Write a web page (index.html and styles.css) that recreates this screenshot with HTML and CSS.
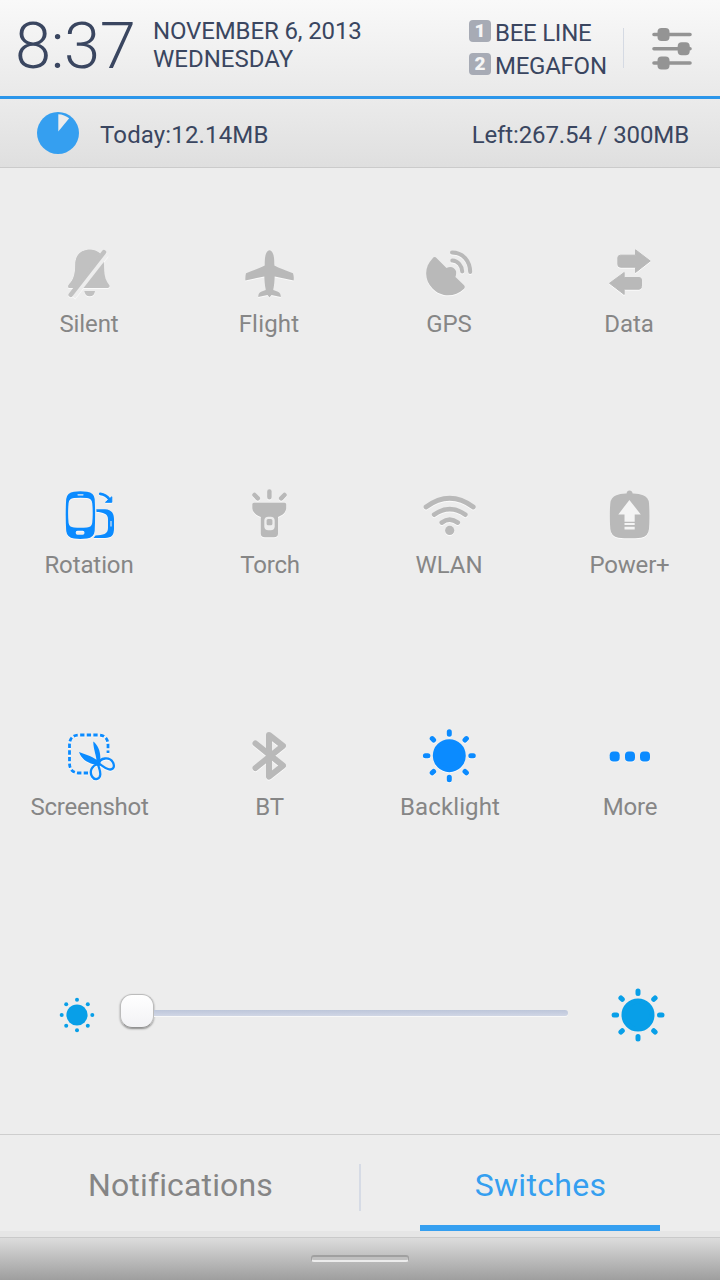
FILE: index.html
```html
<!DOCTYPE html>
<html lang="en">
<head>
<meta charset="utf-8">
<title>Quick switches</title>
<link rel="stylesheet" href="styles.css">
</head>
<body>
<div class="panel">
  <header class="header">
    <div class="clock">8:37</div>
    <div class="date"><span class="day">NOVEMBER 6, 2013</span><span class="weekday">WEDNESDAY</span></div>
    <div class="carriers">
      <div class="carrier"><span class="sim">1</span><span class="bee">BEE LINE</span></div>
      <div class="carrier"><span class="sim">2</span><span class="mega">MEGAFON</span></div>
    </div>
    <div class="rule"></div>
    <svg class="settings" width="44" height="44" viewBox="0 0 44 44">
      <g stroke="#949494" stroke-width="3.600" stroke-linecap="round"><path d="M4 8.500H40M4 22.700H40M4 37H40"/></g>
      <g fill="#949494"><rect x="7.500" y="2" width="12" height="13" rx="4"/><rect x="27.700" y="16.200" width="12" height="13" rx="4"/><rect x="7.500" y="30.500" width="12" height="13" rx="4"/></g>
    </svg>
  </header>
  <section class="usage">
    <svg class="pie" width="44" height="44" viewBox="0 0 44 44"><circle cx="22" cy="22" r="21" fill="#359ff0"/><path d="M22.300 20.500V3.200A19 19 0 0 1 33.200 7.300Z" fill="#ececec"/></svg>
    <span class="today">Today:12.14MB</span>
    <span class="left">Left:267.54 / 300MB</span>
  </section>
  <main class="grid">
    <div class="switch"><svg class="icon" viewBox="0 0 60 60">
      <g fill="#c1c1c1"><path d="M30 5.700C21 5.700 15.500 11 15.300 21C15.200 31 13.500 36 9 40.500Q7 44 10 44H48Q51 43 48.500 40C45 35 44.200 31 44 20C43.500 11 38.500 5.700 30 5.700Z"/><path d="M24.300 47H35Q34.500 52.300 29.700 52.300T24.300 47Z"/></g>
      <path d="M12.200 52L45.500 9.400" stroke="#ededed" stroke-width="8"/><path d="M10.700 50.800L44 8.200" stroke="#c1c1c1" stroke-width="4.500" stroke-linecap="round"/><path d="M15.300 21C15.500 11 21 5.700 30 5.700Q36 5.700 40 10L22 35.500L14.500 44H10Q7 44 9 40.500C13.500 36 15.200 31 15.300 21Z" fill="#c1c1c1"/>
    </svg><span class="label">Silent</span></div>
    <div class="switch"><svg class="icon" viewBox="0 0 60 60"><path fill="#b9b9b9" d="M29.500 6.200C26 7 24.700 11 24.700 21.500C20 24 13 26.500 6 29.200Q5 33 5.400 36.400L24.300 32.500C24.300 37 25 42 25.700 46C22 47.500 18 48 18.300 53L27.500 51L29.500 53.500L31.500 51L40.800 53C41 48 37 47.500 33.300 46C34 42 34.700 37 34.700 32.500L53.700 36.400Q54.200 33 53 29.200C46 26.500 39 24 34.400 21.500C34.400 11 33 7 29.500 6.200Z"/></svg><span class="label flight">Flight</span></div>
    <div class="switch"><svg class="icon" viewBox="0 0 60 60"><path fill="#b9b9b9" d="M16.500 14Q14.500 12 12.500 14.500C4 23 4 36 12.500 44.500C21 53.500 35 53.500 43.800 45Q45.800 43 43.800 41L35.500 33Q36.500 30 36 27C34 22.500 30 22 26.500 24Z"/><path fill="none" stroke="#b9b9b9" stroke-width="4" stroke-linecap="round" d="M32 8.500C43 8.500 50 17 50.200 28M32.300 16.600C38 16.800 42 22 42.200 27.500"/></svg><span class="label">GPS</span></div>
    <div class="switch"><svg class="icon" viewBox="0 0 60 60"><path fill="#b9b9b9" stroke="#b9b9b9" stroke-linejoin="round" d="M20.500 11.200H35.500V5.800L50.200 17L35.500 28.500V23.200H20.500Q17.800 23.200 17.800 20.500V14Q17.800 11.200 20.500 11.200ZM39 33.500H24.200V28.500L9.500 39.300L24.200 50.500V45.200H39Q41.500 45.200 41.500 42.500V36Q41.500 33.500 39 33.500Z"/></svg><span class="label">Data</span></div>

    <div class="switch"><svg class="icon" viewBox="0 0 60 60">
      <path fill="#0b8bff" fill-rule="evenodd" d="M14 6.700Q20 5.800 27 6.700Q34 7.500 34.700 14Q35.500 30 34.700 46Q34 52.600 27 53.500Q20 54.300 14 53.500Q7 52.600 6.200 46Q5.200 30 6.200 14Q7 7.500 14 6.700ZM14 13Q9 13.500 8.600 18Q7.600 29 8.600 38Q9 42.200 14 42.500Q20 43.100 27 42.500Q31.700 42.200 32.200 38Q33.200 29 32.200 18Q31.700 13.500 27 13Q20 12.400 14 13ZM17.500 45.800Q15.700 45.900 15.700 47.800T17.500 49.700H22.700Q24.500 49.700 24.500 47.800T22.700 45.800Z"/>
      <path stroke="#ededed" stroke-width="1.200" stroke-linecap="round" d="M18 9.800H23"/>
      <path fill="#0b8bff" d="M36.300 24.300H45C52 24.600 53.900 29 54 34V44C53.800 50 52 52.800 45 53H33.500L35.500 50.500C43 50.200 48 49 48 43V34C48 29 43 27 36.500 27Z"/><path stroke="#ededed" stroke-width="1.100" d="M51 36V41.500"/>
      <path fill="none" stroke="#0b8bff" stroke-width="2.800" stroke-linecap="round" d="M40.300 8.900Q46 9.500 49.500 14.500"/><path fill="#0b8bff" stroke="#0b8bff" stroke-linejoin="round" d="M51.800 11.800V17.300H45.500Z"/>
    </svg><span class="label">Rotation</span></div>
    <div class="switch"><svg class="icon" viewBox="0 0 60 60"><path stroke="#b9b9b9" stroke-width="4.500" stroke-linecap="round" d="M29.400 6.500V12.200M14.500 10L17.800 13.300M44.500 10L41.200 13.300"/><path fill="#b9b9b9" d="M14 17.700H44.500Q46.200 17.700 46.200 19.500V23C46.200 27.500 42 30.500 38 32V48.500Q38 52.300 34 52.300H24.700Q20.800 52.300 20.800 48.500V32C17 30.500 12.300 27.500 12.300 23V19.500Q12.300 17.700 14 17.700Z"/><rect x="24.300" y="31.800" width="10.400" height="13.500" rx="4" fill="#ededed"/><rect x="26.600" y="34" width="5.800" height="6.200" rx="1.500" fill="#b9b9b9"/></svg><span class="label torch">Torch</span></div>
    <div class="switch"><svg class="icon" viewBox="0 0 60 60"><g fill="none" stroke="#b9b9b9" stroke-width="4.700" stroke-linecap="round"><path d="M6 22Q29.700 4.500 53.300 22M14.200 29.700Q29.700 18.500 45.300 29.700M21.800 37.600Q29.700 31.500 37.700 37.600"/></g><circle cx="29.700" cy="45.400" r="4.600" fill="#b9b9b9"/></svg><span class="label">WLAN</span></div>
    <div class="switch"><svg class="icon" viewBox="0 0 60 60"><path fill="#b9b9b9" d="M26.500 8.500Q27 5.600 29.500 5.600T32.700 8.500Q39 8.400 43 10.200Q48.500 12.500 49 18Q50 31 49 44Q48.300 51.500 41 52.700Q29.500 54 18.500 52.700Q11 51.500 10.300 44Q9.300 31 10.300 18Q11 12.500 16.300 10.200Q20 8.400 26.500 8.500Z"/><path fill="#f4f4f4" d="M29.400 15L40.800 29.400H34.700V36.700H24.500V29.400H18.300ZM24.500 38H34.700V40H24.500ZM24.500 41.700H34.700V44.400H24.500Z"/></svg><span class="label power">Power+</span></div>

    <div class="switch"><svg class="icon" viewBox="0 0 60 60">
      <path fill="none" stroke="#0b8bff" stroke-width="2.800" stroke-dasharray="4.300 2.300" d="M28 47H19.500Q9.500 47 9.500 37V19Q9.500 9 19.500 9H38Q48 9 48 19V27"/>
      <path fill="#0b8bff" d="M33.300 15.500C38.500 19.500 41.500 27 40 37L36.800 36.500C36.500 30 33 22 33.300 15.500ZM19 26C26 28.500 34 31 39.500 36L37.800 39.500C30 37.500 22 35 19 26Z"/>
      <g fill="none" stroke="#0b8bff" stroke-width="2.300"><path d="M39 37.500C40 31.500 49.500 30.500 53 36.500C55.500 42 52 44.500 48 43C44.500 42 41.500 39 39 37.500ZM38 38C32 39.500 29 45 32 50.500C35 55 40 53 40.300 48.500C40.500 44 38.500 41.500 38 38Z"/></g>
    </svg><span class="label">Screenshot</span></div>
    <div class="switch"><svg class="icon" viewBox="0 0 60 60"><path fill="none" stroke="#b9b9b9" stroke-width="6" stroke-linecap="round" stroke-linejoin="round" d="M15.500 17.500L43 39.700L29 50.700V9L43 19.800L15.500 42"/></svg><span class="label">BT</span></div>
    <div class="switch"><svg class="icon" viewBox="0 0 60 60"><g fill="#0b8bff" stroke="#0b8bff" stroke-width="5" stroke-linecap="round"><circle cx="29.300" cy="29.700" r="14"/><path d="M29.300 5.800V8.300M29.300 51.200V53.700M5.400 29.700H7.900M50.800 29.700H53.300M12.200 12.600L13.600 14M45 45.400L46.400 46.800M12.200 46.800L13.600 45.400M45 14L46.400 12.600"/></g></svg><span class="label light">Backlight</span></div>
    <div class="switch"><svg class="icon" viewBox="0 0 60 60"><g fill="#0b8bff"><rect x="9.700" y="25.500" width="10" height="10" rx="3.800"/><rect x="25" y="25.500" width="10" height="10" rx="3.800"/><rect x="40" y="25.500" width="10" height="10" rx="3.800"/></g></svg><span class="label more">More</span></div>
  </main>
  <section class="brightness">
    <svg class="dim" width="36" height="36" viewBox="0 0 36 36"><g fill="#089fe8"><circle cx="18" cy="18" r="10.600"/><circle cx="18" cy="2.700" r="2"/><circle cx="18" cy="33.300" r="2"/><circle cx="2.700" cy="18" r="2"/><circle cx="33.300" cy="18" r="2"/><circle cx="7.200" cy="7.200" r="2"/><circle cx="28.800" cy="7.200" r="2"/><circle cx="7.200" cy="28.800" r="2"/><circle cx="28.800" cy="28.800" r="2"/></g></svg>
    <div class="slider"><div class="knob"></div><div class="track"></div></div>
    <svg class="bright" width="60" height="60" viewBox="0 0 60 60"><g fill="#089fe8" stroke="#089fe8" stroke-width="5" stroke-linecap="round"><circle cx="30" cy="30" r="14"/><path d="M30 6.100V8.600M30 51.500V54M6.100 30H8.600M51.500 30H54M12.900 12.900L14.300 14.300M45.700 45.700L47.100 47.100M12.900 47.100L14.300 45.700M45.700 14.300L47.100 12.900"/></g></svg>
  </section>
  <nav class="tabs">
    <div class="tab"><span class="notif">Notifications</span></div>
    <div class="divider"></div>
    <div class="tab active"><span class="sw">Switches</span></div>
  </nav>
  <footer class="footer"><div class="handle"></div></footer>
</div>
</body>
</html>
```
FILE: styles.css
```css
* { box-sizing: border-box; }
body { margin: 0; font-family: Roboto, "Liberation Sans", sans-serif; font-size: 24px; color: #3a4660; }
.panel { width: 720px; height: 1280px; display: flex; flex-direction: column; background: #ededed; overflow: hidden; white-space: nowrap; }
.header { height: 99px; flex: none; display: flex; align-items: flex-start; background: linear-gradient(#f9f9f9, #e9e9e9); border-bottom: 3px solid #2c96ea; }
.clock { width: 137px; padding-left: 15px; margin-top: 8px; font-size: 65px; line-height: 76px; font-weight: 300; letter-spacing: -0.3px; }
.date { width: 332px; padding: 17px 0 0 16px; display: flex; flex-direction: column; line-height: 28px; }
.day { letter-spacing: -0.13px; }
.carriers { width: 154px; padding-top: 17px; }
.carrier { height: 33px; display: flex; gap: 4px; line-height: 33px; letter-spacing: -0.25px; }
.sim { width: 22px; height: 22px; margin-top: 3px; border-radius: 4px; background: #a7abb5; color: #f5f5f5; font-size: 19px; line-height: 22px; font-weight: 900; text-align: center; }
.rule { width: 1px; height: 40px; margin-top: 28px; background: #d5dae3; }
.settings { margin: 26px 0 0 26px; }
.usage { height: 69px; flex: none; display: flex; align-items: center; background: linear-gradient(#ebebeb, #dfdfdf); border-bottom: 1px solid #cbcbcb; padding: 0 31px 0 36px; }
.today { margin-left: 20px; padding-top: 3px; letter-spacing: 0.15px; }
.left { margin-left: auto; padding-top: 3px; letter-spacing: -0.12px; }
.grid { height: 723px; flex: none; display: grid; grid-template-columns: repeat(4, 180px); grid-template-rows: repeat(3, 241px); }
.switch { padding-top: 76px; display: flex; flex-direction: column; align-items: center; }
.icon { width: 60px; height: 60px; flex: none; filter: drop-shadow(0 1px 0 #fafafa); }
.label { margin-top: 5px; line-height: 30px; color: #868686; padding-right: 2px; letter-spacing: -0.1px; }
.switch:nth-child(n+9) .label { margin-top: 6px; letter-spacing: -0.25px; padding-right: 1px; }
.switch .flight { letter-spacing: 0.2px; }
.switch .torch { letter-spacing: -0.2px; padding-right: 0; }
.switch .power { letter-spacing: -0.2px; padding-right: 1px; }
.switch:nth-child(n+9) .light { letter-spacing: 0.1px; padding-right: 0; }
.switch:nth-child(n+9) .more { padding-right: 0; }
.brightness { flex: 1; display: flex; align-items: flex-start; padding: 93px 0 0 59px; }
.dim { margin-top: 12.500px; }
.slider { width: 448px; height: 60px; margin: 0 40px 0 25px; display: flex; align-items: center; }
.knob { width: 34px; height: 34px; flex: none; margin-top: -6px; border: 1px solid #bcbcbc; border-bottom-color: #929292; border-radius: 12px; background: linear-gradient(#fff, #f2f2f5); box-shadow: 0 1px 2px #888; }
.track { flex: 1; height: 6px; margin-top: -3px; background: linear-gradient(#bdc6da, #d0d6e5); border-radius: 0 3px 3px 0; box-shadow: 0 1px 0 #f8f8f8; }
.bright { margin-top: 0.500px; }
.tabs { height: 103px; flex: none; display: flex; border-top: 1px solid #cecece; border-bottom: 6px solid #e6e6e6; font-size: 32px; line-height: 38px; color: #858585; }
.tab { flex: 1; display: flex; justify-content: center; padding-top: 31px; }
.notif { letter-spacing: 0.15px; padding-left: 2px; font-variant-ligatures: common-ligatures; }
.sw { letter-spacing: 0.3px; }
.divider { width: 2px; height: 47px; margin-top: 29px; background: #d6dbe5; }
.active { position: relative; color: #359ff0; }
.active::after { content: ""; position: absolute; left: 59px; bottom: 0; width: 240px; height: 6px; background: #359ff0; }
.footer { height: 43px; flex: none; border-top: 1px solid #cacaca; background: linear-gradient(#dcdcdc, #9e9e9e); display: flex; justify-content: center; padding-top: 17px; }
.handle { width: 98px; height: 7px; border: 1px solid #a0a0a0; border-top-width: 2px; border-bottom: 2px solid #ececec; border-radius: 3px; background: #c0c0c0; }
```
